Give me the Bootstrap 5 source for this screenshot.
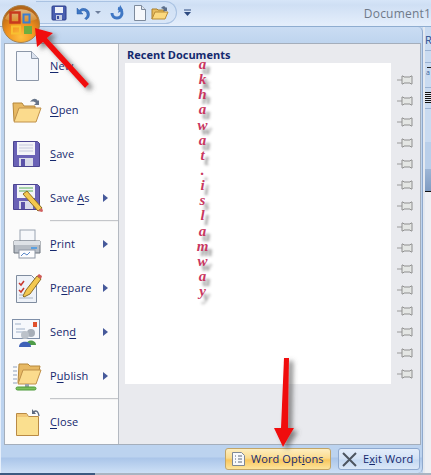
<!DOCTYPE html>
<html><head><meta charset="utf-8">
<link href="https://cdn.jsdelivr.net/npm/bootstrap@5.3.0/dist/css/bootstrap.min.css" rel="stylesheet">
<style>
html,body{margin:0;padding:0;background:#c4d8f0}
#win{width:431px;height:475px;position:relative;overflow:hidden;font-family:"Open Sans","Noto Sans",sans-serif;font-size:11px;color:#15286e}
.tbar{height:27px;background:linear-gradient(#d6e5f8 0,#cfdff4 5px,#e4eefb 25px);border-bottom:1px solid #8fadd0;padding-left:36px}
.qat{height:23px;width:141px;margin-top:1px;background:linear-gradient(#cfe0f5,#d9e6f7);border:1px solid #a9c2e2;border-left:0;border-radius:0 12px 12px 0;padding-left:15px}
.qdrop{margin-left:7px;margin-top:9px}
.docname{color:#6f7a89;font-size:12px;letter-spacing:.2px;margin-left:auto;line-height:27px}
.midrow{height:446px}
.frame{width:423px;height:446px;flex:none;background:linear-gradient(#cadcf3 0,#bed4ee 16px,#bcd3ef 430px,#aac5e9 431px,#cde0f6 446px);border-right:1px solid #8fa9cc;border-left:1px solid #e6effb;border-radius:0 5px 5px 0;padding:16px 2px 0 3px}
.shade{width:2px;flex:none;background:#e4e9f0}
.panel{height:402px;width:417px;border:1px solid #a4aebb;background:#e9eaee}
.lcol{width:114px;background:#fbfbfb;border-right:1px solid #b4b9c1}
.mitem{height:44px;padding-left:7px;gap:8px;flex:none}
.mitem svg{flex:none}
.mitem u{text-underline-offset:2px}
.mlabel{flex:1;letter-spacing:.1px}
.arr{width:0;height:0;border-left:5px solid #46599a;border-top:4px solid transparent;border-bottom:4px solid transparent;margin-right:10px}
.msep{height:2px;background:#c4c6ca;margin-left:45px;flex:none;border-bottom:1px solid #f2f2f2}
.rcol{padding-left:6px}
.rtitle{height:19px;font-weight:700;line-height:21px;padding-left:2px;color:#14296e;font-size:11px}
.docrow{gap:6px}
.dlist{width:266px;height:321px;background:#fff}
.ltr{display:block;height:15.15px;line-height:3px;width:155px;font-family:"Liberation Serif",serif;font-style:italic;font-weight:700;font-size:15px;color:#c9375f;text-align:center;text-shadow:4px 5px 3px #8f8f8f}
.pins{padding-top:7px}
.pin{height:21px;flex:none}
.foot{height:29px;gap:7px;padding:3px 0 0 0;justify-content:flex-end}
.obtn{height:22px;font-size:11px;letter-spacing:.1px;border-radius:3px;gap:5px;color:#15286e;white-space:nowrap;flex:none}
.wopt{width:106px;background:linear-gradient(#fdeec0 0,#fbdc8f 45%,#f8c65e 55%,#fde49b 100%);border:1px solid #c2a568;padding-left:5px}
.wexit{width:82px;background:linear-gradient(#e3edfa 0,#d3e2f5 50%,#c5d9f2 55%,#dbe8f8 100%);border:1px solid #8ea9cf;padding-left:3px}
.wexit span{margin-left:1px}
.strip{background:#eef0f4;overflow:hidden;color:#2a4c8f;font-size:11px;line-height:12px}
.stop{height:115px;background:#c9dbf1;padding-top:7px;}
.sr{height:11px}
.sl{height:1px;background:#9ab2d2}
.sdark{height:1px;background:#222;margin-top:4px;margin-left:2px}
.sa{height:9px;font-size:7px;line-height:9px;color:#3a5fa0;margin-top:0;margin-left:1px}
.sbars{height:11px;background:repeating-linear-gradient(#111 0,#111 1px,#dfe8f4 1px,#dfe8f4 2px)}
.sblock{height:23px;background:linear-gradient(#9db6d6,#7f9cc2);border-bottom:1px solid #111}
.sgap{height:27px;background:#b9cfea}
.bbar{height:2px;background:linear-gradient(90deg,#3c5a80 95px,#a9b4c2 95px)}
.over{position:absolute;left:0;top:0;pointer-events:none}
.ofb{position:absolute;left:2px;top:4px}
</style></head><body>
<div id="win">
<div class="tbar d-flex">
 <div class="qat d-flex align-items-center">
  <svg width="16" height="16" viewBox="0 0 16 16"><rect x="1" y="1" width="14" height="14" rx="1" fill="#4a5fb0" stroke="#2d3f8c"/><rect x="4" y="2" width="8" height="6" fill="#eef1f8"/><rect x="5" y="10" width="6" height="5" fill="#c8cfe4"/><rect x="6" y="11" width="2" height="3" fill="#3a4c9c"/></svg>
  <svg class="ms-2" width="16" height="16" viewBox="0 0 16 16"><path d="M2 3v6h6L5.800 6.800A3.600 3.600 0 0 1 12 9.500c0 1.500-.8 3-2.300 3.800l1.500 1.500A6 6 0 0 0 14.500 9.500 6 6 0 0 0 4.200 5.200Z" fill="#3f77c4" stroke="#2a5ea8" stroke-width=".5"/></svg>
  <svg class="ms-1" width="6" height="4" viewBox="0 0 6 4"><path d="M0 0h6L3 3Z" fill="#6e7f9c"/></svg>
  <svg class="ms-2" width="16" height="16" viewBox="0 0 16 16"><path d="M3 8a5 5 0 1 0 6-4.800" fill="none" stroke="#3f77c4" stroke-width="3"/><path d="M13 1v6H7Z" fill="#3f77c4" transform="rotate(-30 10 4)"/></svg>
  <svg class="ms-2" width="14" height="18" viewBox="0 0 14 18"><path d="M1.500 1.500h7l4 4v11h-11Z" fill="#f6f8fc" stroke="#7d8a9c"/><path d="M8.500 1.500v4h4" fill="#dfe5ee" stroke="#7d8a9c"/></svg>
  <svg class="ms-1" width="18" height="16" viewBox="0 0 18 16"><path d="M1 14V4h5l1 1h6v3H5L1 14Z" fill="#e8bd5f" stroke="#a97e2a"/><path d="M1 14 4 7h13l-3 7Z" fill="#fbd97f" stroke="#b98c36"/><path d="M10 3c2-2.500 4-2 5 0l1-1v4h-4l1-1c-.7-1-1.500-1.500-3-2Z" fill="#5b6f8c"/></svg>
 </div>
 <svg class="qdrop" width="7" height="8" viewBox="0 0 7 8"><path d="M0 1h7" stroke="#2c4a80"/><path d="M0 3h7L3.500 7Z" fill="#2c4a80"/></svg>
 <div class="docname">Document1</div>
</div>
<div class="midrow d-flex">
 <div class="frame">
  <div class="panel d-flex">
   <div class="lcol d-flex flex-column">
    <div class="mitem d-flex align-items-center">
     <svg width="30" height="32" viewBox="0 0 30 32"><path d="M4.500 1.500h15l7 7v22h-22Z" fill="#f4f7fc" stroke="#8c97a8"/><path d="M19.500 1.500v7h7" fill="#dbe2ee" stroke="#8c97a8"/></svg>
     <span class="mlabel"><u>N</u>ew</span></div>
    <div class="mitem d-flex align-items-center">
     <svg width="30" height="32" viewBox="0 0 30 32"><path d="M2 27 1 9h9l2 3h11v15Z" fill="#e7b964" stroke="#b5873a"/><path d="M2 28 7 14h22l-5 14Z" fill="#fbdb8d" stroke="#c0914a"/><path d="M18 8c3-4 6-4 8-1l1-1v5h-5l2-2c-1-1-3-2-6-1Z" fill="#67758a"/></svg>
     <span class="mlabel"><u>O</u>pen</span></div>
    <div class="mitem d-flex align-items-center">
     <svg width="30" height="32" viewBox="0 0 30 32"><path d="M1.500 3.500h24l2 2v23h-26Z" fill="#6a62b6" stroke="#4b4590"/><rect x="5" y="4" width="18" height="13" fill="#f3f4f8"/><path d="M7 7h14M7 10h14M7 13h14" stroke="#c6c9dc"/><rect x="7" y="20" width="14" height="8" fill="#d9dbe9"/><rect x="9" y="21" width="4" height="7" fill="#5a52a8"/></svg>
     <span class="mlabel"><u>S</u>ave</span></div>
    <div class="mitem d-flex align-items-center">
     <svg width="32" height="32" viewBox="0 0 32 32"><path d="M1.500 2.500h24l2 2v23h-26Z" fill="#6a62b6" stroke="#4b4590"/><rect x="5" y="3" width="18" height="13" fill="#f3f4f8"/><path d="M7 6h14M7 9h14" stroke="#58b05a"/><rect x="7" y="19" width="14" height="8" fill="#d9dbe9"/><rect x="9" y="20" width="4" height="7" fill="#5a52a8"/><path d="m11 12 4-3 15 17-4 3Z" fill="#f3c84f" stroke="#8c6c22"/><path d="m26 29 4-3 1 3-1 1Z" fill="#d06060"/></svg>
     <span class="mlabel" style="margin-left:-2px">Save <u>A</u>s</span><i class="arr"></i></div>
    <div class="msep"></div>
    <div class="mitem d-flex align-items-center">
     <svg width="30" height="32" viewBox="0 0 30 32"><rect x="8" y="2" width="15" height="11" fill="#f6f8fb" stroke="#9aa4b2"/><path d="M2 13h26v12H2Z" fill="#b7bdc5" stroke="#6a727d"/><rect x="2" y="13" width="26" height="4" fill="#dde1e6"/><rect x="19" y="19" width="6" height="2" fill="#5aa0e0"/><rect x="7" y="22" width="16" height="8" fill="#fdfdfe" stroke="#8f98a6"/><path d="M9 28l3-3 3 2 3-3" stroke="#5b88c8" fill="none"/></svg>
     <span class="mlabel"><u>P</u>rint</span><i class="arr"></i></div>
    <div class="mitem d-flex align-items-center">
     <svg width="30" height="32" viewBox="0 0 30 32"><path d="M4.500 3.500h15l5 5v22h-20Z" fill="#eef2f8" stroke="#7f8c9f"/><path d="M7 11l2 2 3-4M7 18l2 2 3-4" stroke="#c8382e" fill="none" stroke-width="1.500"/><path d="M7 26h14M7 23h6" stroke="#a9b4c4"/><path d="m11 24 3-6L25 4l4 3-11 15-6 3Z" fill="#f3c84f" stroke="#8c6c22"/><path d="m25 4 2-2 3 2-1 3Z" fill="#cf5a55"/></svg>
     <span class="mlabel">Pr<u>e</u>pare</span><i class="arr"></i></div>
    <div class="mitem d-flex align-items-center">
     <svg width="32" height="32" viewBox="0 0 32 32" style="margin-left:-1px;margin-right:-1px"><rect x="1.500" y="3.500" width="27" height="19" fill="#f6f8fc" stroke="#7f8fa8"/><rect x="22" y="6" width="4" height="5" fill="#e0512e"/><path d="M4 8h6M5 13h9M5 16h9" stroke="#9fb0c8"/><circle cx="20" cy="17" r="4" fill="#a7aeb8"/><path d="M15 29c0-6 10-6 10 0Z" fill="#4f9c48"/><circle cx="14" cy="19" r="4" fill="#bcc2ca"/><path d="M8 31c0-7 12-7 12 0Z" fill="#3f62b8"/></svg>
     <span class="mlabel">Sen<u>d</u></span><i class="arr"></i></div>
    <div class="mitem d-flex align-items-center">
     <svg width="30" height="32" viewBox="0 0 30 32"><path d="M1 7h4M1 11h4M1 15h4M1 19h4M1 23h4" stroke="#8fa1bd"/><path d="M6 23 7 4h9l2 2h10l-1 5" fill="#e7b964" stroke="#b5873a"/><path d="M6 24 11 10h18l-5 14Z" fill="#fbdb8d" stroke="#c0914a"/><rect x="13" y="24" width="4" height="4" fill="#9aa2ac"/><rect x="4" y="27" width="20" height="3" rx="1.500" fill="#7cc15c" stroke="#4c9a3a"/></svg>
     <span class="mlabel">P<u>u</u>blish</span><i class="arr"></i></div>
    <div class="msep"></div>
    <div class="mitem d-flex align-items-center">
     <svg width="30" height="32" viewBox="0 0 30 32"><path d="M4.500 29.500V7.500h10l2 3h10v19Z" fill="#fadf8f" stroke="#b98a45"/><path d="M5 8h9l2 3H5Z" fill="#f2c878"/><path d="M21 7c2-3 5-3 6 3" fill="none" stroke="#5d6a80" stroke-width="1.300"/><path d="M20 3v5h4Z" fill="#5d6a80"/></svg>
     <span class="mlabel"><u>C</u>lose</span></div>
   </div>
   <div class="rcol flex-grow-1">
    <div class="rtitle">Recent Documents</div>
    <div class="docrow d-flex">
     <div class="dlist">
      <span class="ltr">a</span><span class="ltr">k</span><span class="ltr">h</span><span class="ltr">a</span><span class="ltr">w</span><span class="ltr">a</span><span class="ltr">t</span><span class="ltr">.</span><span class="ltr">i</span><span class="ltr">s</span><span class="ltr">l</span><span class="ltr">a</span><span class="ltr">m</span><span class="ltr">w</span><span class="ltr">a</span><span class="ltr">y</span>
     </div>
     <div class="pins d-flex flex-column">
      <svg class="pin" width="16" height="21" viewBox="0 0 16 21"><path d="M0 10h5" stroke="#9a9a9a"/><path d="M5 6h1l1 1h6l1-1h1v8h-1l-1-1H7l-1 1H5Z" fill="#e4e6e4" stroke="#8f8f8f"/></svg>
      <svg class="pin" width="16" height="21" viewBox="0 0 16 21"><path d="M0 10h5" stroke="#9a9a9a"/><path d="M5 6h1l1 1h6l1-1h1v8h-1l-1-1H7l-1 1H5Z" fill="#e4e6e4" stroke="#8f8f8f"/></svg>
      <svg class="pin" width="16" height="21" viewBox="0 0 16 21"><path d="M0 10h5" stroke="#9a9a9a"/><path d="M5 6h1l1 1h6l1-1h1v8h-1l-1-1H7l-1 1H5Z" fill="#e4e6e4" stroke="#8f8f8f"/></svg>
      <svg class="pin" width="16" height="21" viewBox="0 0 16 21"><path d="M0 10h5" stroke="#9a9a9a"/><path d="M5 6h1l1 1h6l1-1h1v8h-1l-1-1H7l-1 1H5Z" fill="#e4e6e4" stroke="#8f8f8f"/></svg>
      <svg class="pin" width="16" height="21" viewBox="0 0 16 21"><path d="M0 10h5" stroke="#9a9a9a"/><path d="M5 6h1l1 1h6l1-1h1v8h-1l-1-1H7l-1 1H5Z" fill="#e4e6e4" stroke="#8f8f8f"/></svg>
      <svg class="pin" width="16" height="21" viewBox="0 0 16 21"><path d="M0 10h5" stroke="#9a9a9a"/><path d="M5 6h1l1 1h6l1-1h1v8h-1l-1-1H7l-1 1H5Z" fill="#e4e6e4" stroke="#8f8f8f"/></svg>
      <svg class="pin" width="16" height="21" viewBox="0 0 16 21"><path d="M0 10h5" stroke="#9a9a9a"/><path d="M5 6h1l1 1h6l1-1h1v8h-1l-1-1H7l-1 1H5Z" fill="#e4e6e4" stroke="#8f8f8f"/></svg>
      <svg class="pin" width="16" height="21" viewBox="0 0 16 21"><path d="M0 10h5" stroke="#9a9a9a"/><path d="M5 6h1l1 1h6l1-1h1v8h-1l-1-1H7l-1 1H5Z" fill="#e4e6e4" stroke="#8f8f8f"/></svg>
      <svg class="pin" width="16" height="21" viewBox="0 0 16 21"><path d="M0 10h5" stroke="#9a9a9a"/><path d="M5 6h1l1 1h6l1-1h1v8h-1l-1-1H7l-1 1H5Z" fill="#e4e6e4" stroke="#8f8f8f"/></svg>
      <svg class="pin" width="16" height="21" viewBox="0 0 16 21"><path d="M0 10h5" stroke="#9a9a9a"/><path d="M5 6h1l1 1h6l1-1h1v8h-1l-1-1H7l-1 1H5Z" fill="#e4e6e4" stroke="#8f8f8f"/></svg>
      <svg class="pin" width="16" height="21" viewBox="0 0 16 21"><path d="M0 10h5" stroke="#9a9a9a"/><path d="M5 6h1l1 1h6l1-1h1v8h-1l-1-1H7l-1 1H5Z" fill="#e4e6e4" stroke="#8f8f8f"/></svg>
      <svg class="pin" width="16" height="21" viewBox="0 0 16 21"><path d="M0 10h5" stroke="#9a9a9a"/><path d="M5 6h1l1 1h6l1-1h1v8h-1l-1-1H7l-1 1H5Z" fill="#e4e6e4" stroke="#8f8f8f"/></svg>
      <svg class="pin" width="16" height="21" viewBox="0 0 16 21"><path d="M0 10h5" stroke="#9a9a9a"/><path d="M5 6h1l1 1h6l1-1h1v8h-1l-1-1H7l-1 1H5Z" fill="#e4e6e4" stroke="#8f8f8f"/></svg>
      <svg class="pin" width="16" height="21" viewBox="0 0 16 21"><path d="M0 10h5" stroke="#9a9a9a"/><path d="M5 6h1l1 1h6l1-1h1v8h-1l-1-1H7l-1 1H5Z" fill="#e4e6e4" stroke="#8f8f8f"/></svg>
      <svg class="pin" width="16" height="21" viewBox="0 0 16 21"><path d="M0 10h5" stroke="#9a9a9a"/><path d="M5 6h1l1 1h6l1-1h1v8h-1l-1-1H7l-1 1H5Z" fill="#e4e6e4" stroke="#8f8f8f"/></svg>
     </div>
    </div>
   </div>
  </div>
  <div class="foot d-flex">
   <div class="obtn wopt d-flex align-items-center">
    <svg width="15" height="16" viewBox="0 0 15 16"><path d="M1.500 1.500h9l3 3v10h-12Z" fill="#f8f9fc" stroke="#7f8895"/><path d="M4 5h1M4 8h1M4 11h1M7 5h4M7 8h4M7 11h4" stroke="#5c6878"/></svg>
    <span>Word Opt<u>i</u>ons</span></div>
   <div class="obtn wexit d-flex align-items-center">
    <svg width="15" height="15" viewBox="0 0 15 15"><path d="M1 1l13 13M14 1 1 14" stroke="#4d5560" stroke-width="2"/></svg>
    <span>E<u>x</u>it Word</span></div>
  </div>
 </div>
 <div class="shade"></div>
 <div class="strip flex-grow-1 d-flex flex-column">
  <div class="stop">
   <div class="sr">R</div><div class="sl" style="margin-top:5px"></div><div class="sl" style="margin-top:11px"></div><div class="sdark"></div><div class="sa">a</div><div class="sl" style="margin-top:10px"></div><div class="sbars" style="margin-top:4px"></div><div class="sl" style="margin-top:5px"></div>
  </div>
  <div class="sgap"></div>
  <div class="sblock"></div>
 </div>
</div>
<div class="bbar"></div>
<div class="ofb">
 <svg width="38" height="40" viewBox="0 0 38 40"><defs><radialGradient id="og" cx=".5" cy=".85" r=".75"><stop offset="0" stop-color="#ffc040"/><stop offset=".55" stop-color="#ef8f1c"/><stop offset="1" stop-color="#b4661a"/></radialGradient><linearGradient id="og2" x1="0" y1="0" x2="0" y2="1"><stop offset="0" stop-color="#ecd2a8"/><stop offset="1" stop-color="#d8902e"/></linearGradient></defs>
 <circle cx="19" cy="20" r="18.500" fill="url(#og)" stroke="#a9824a"/><path d="M3 15a16.500 13 0 0 1 32 0c-8 4-24 4-32 0Z" fill="url(#og2)" opacity=".75"/>
 <rect x="8.500" y="8.500" width="9" height="10" fill="none" stroke="#c8391e" stroke-width="2.500"/><rect x="21.500" y="10.500" width="6" height="8" fill="none" stroke="#3a7fd0" stroke-width="2"/><rect x="10" y="22.500" width="8" height="7" fill="none" stroke="#f8c030" stroke-width="2"/><rect x="22" y="22" width="8" height="8" fill="#6fae3e"/></svg>
</div>
<svg class="over" width="431" height="475" viewBox="0 0 431 475">
 <defs><filter id="ds" x="-50%" y="-50%" width="200%" height="200%"><feDropShadow dx="4" dy="3" stdDeviation="2.500" flood-color="#555" flood-opacity=".7"/></filter></defs>
 <g filter="url(#ds)"><path d="M35 28 53 33 47 38 89 84 85 88 43 42 37 47Z" fill="#f01010"/><path d="M284 358h5l-1 70h6l-11 19-9-19h7Z" fill="#f01010"/></g>
</svg>
</div>
<script src="https://cdn.jsdelivr.net/npm/bootstrap@5.3.0/dist/js/bootstrap.bundle.min.js"></script>
</body></html>
